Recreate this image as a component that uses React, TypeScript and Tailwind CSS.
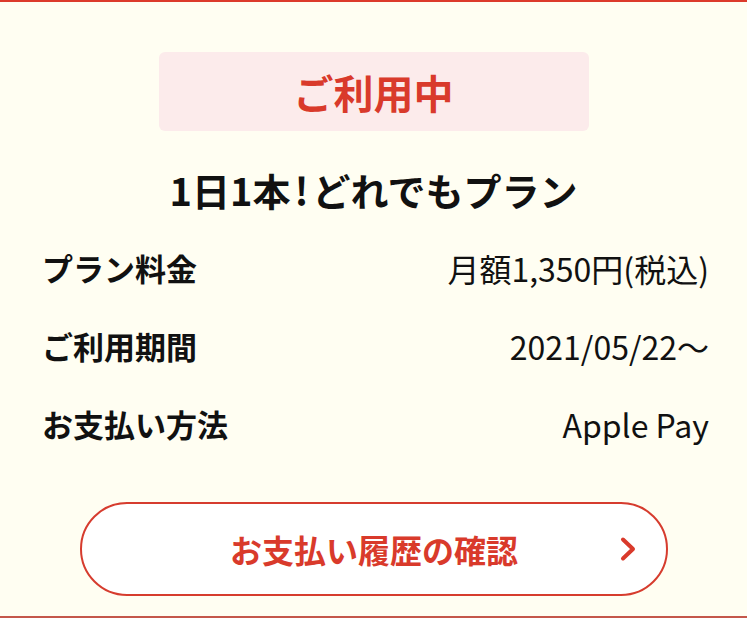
const ROWS: { label: string; value: string }[] = [
  { label: 'プラン料金', value: '月額1,350円(税込)' },
  { label: 'ご利用期間', value: '2021/05/22〜' },
  { label: 'お支払い方法', value: 'Apple Pay' },
];

export default function App() {
  return (
    <div
      className="h-[618px] w-full overflow-hidden bg-[#fffef2] border-t-2 border-b-2 border-t-[#dc3a2b] border-b-[#c4574b] text-[#111]"
      style={{ fontFamily: '"Noto Sans CJK JP", "Noto Sans", sans-serif' }}
    >
      {/* status badge */}
      <div className="pt-[50px] flex justify-center">
        <div className="w-[430px] h-[79px] rounded-md bg-[#fcebeb] flex items-center justify-center">
          <span className="text-[40px] font-bold text-[#d93a2b] leading-none">ご利用中</span>
        </div>
      </div>

      {/* plan name */}
      <h1 className="mt-[35px] text-center text-[38px] leading-[48px] font-bold">
        1日1本<span className="mx-[4px]">!</span>どれでもプラン
      </h1>

      {/* details */}
      <div className="mt-[15px] pl-[42px] pr-[38px]">
        {ROWS.map(row => (
          <div key={row.label} className="h-[78px] flex items-center justify-between">
            <span className="text-[31px] font-bold">{row.label}</span>
            <span className="text-[32px]">{row.value}</span>
          </div>
        ))}
      </div>

      {/* history button */}
      <div className="mt-[39px] pl-[80px] pr-[79px]">
        <button className="relative w-full h-[94px] rounded-full border-2 border-[#d63c2e] bg-white flex items-center justify-center">
          <span className="text-[32px] font-bold text-[#d93a2b]">お支払い履歴の確認</span>
          <svg
            className="absolute right-[29px] top-1/2 -translate-y-1/2"
            width="18"
            height="25"
            viewBox="0 0 18 25"
            fill="none"
          >
            <polyline points="4,3 14,12.5 4,22" stroke="#d93a2b" strokeWidth="4" strokeLinecap="round" strokeLinejoin="round" />
          </svg>
        </button>
      </div>
    </div>
  );
}
